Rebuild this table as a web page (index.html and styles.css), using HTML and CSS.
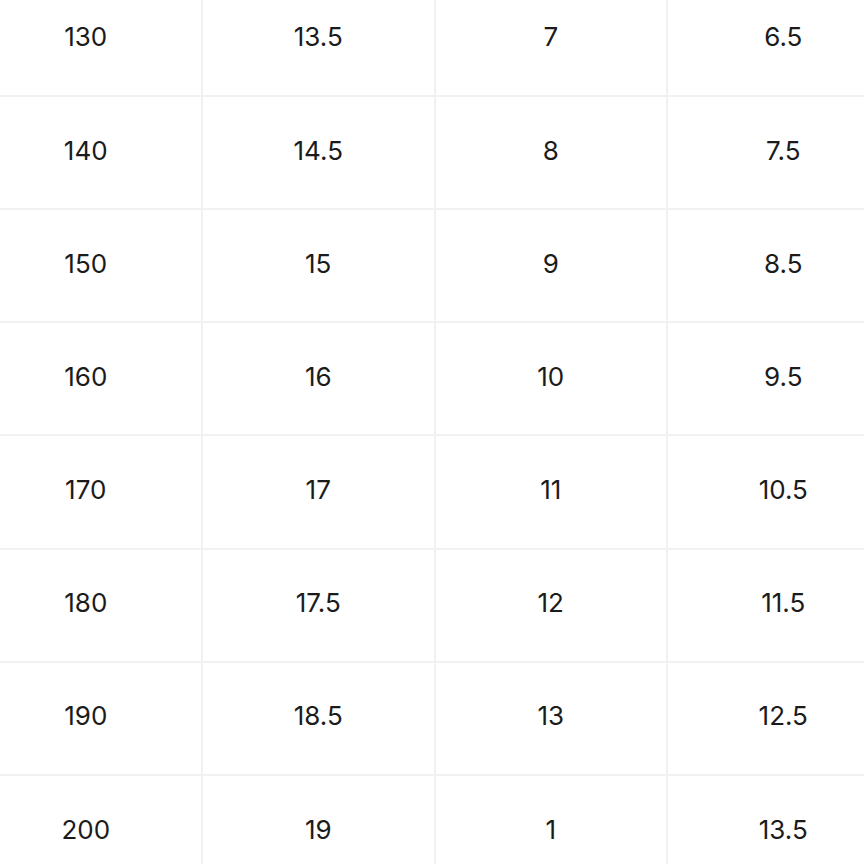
FILE: index.html
```html
<!DOCTYPE html>
<html lang="en">
<head>
<meta charset="utf-8">
<title>Size table</title>
<link rel="stylesheet" href="styles.css">
</head>
<body>
<div class="viewport">
  <div class="size-grid">
    <div class="cell">130</div><div class="cell">13.5</div><div class="cell">7</div><div class="cell">6.5</div>
    <div class="cell">140</div><div class="cell">14.5</div><div class="cell">8</div><div class="cell">7.5</div>
    <div class="cell">150</div><div class="cell">15</div><div class="cell">9</div><div class="cell">8.5</div>
    <div class="cell">160</div><div class="cell">16</div><div class="cell">10</div><div class="cell">9.5</div>
    <div class="cell">170</div><div class="cell">17</div><div class="cell">11</div><div class="cell">10.5</div>
    <div class="cell">180</div><div class="cell">17.5</div><div class="cell">12</div><div class="cell">11.5</div>
    <div class="cell">190</div><div class="cell">18.5</div><div class="cell">13</div><div class="cell">12.5</div>
    <div class="cell">200</div><div class="cell">19</div><div class="cell">1</div><div class="cell">13.5</div>
  </div>
</div>
</body>
</html>
```

FILE: styles.css
```css
html, body {
  margin: 0;
  padding: 0;
  background: #ffffff;
}
body {
  width: 864px;
  height: 864px;
  overflow: hidden;
  font-family: "Inter", "Liberation Sans", sans-serif;
}
.viewport {
  width: 864px;
  height: 864px;
  overflow: hidden;
}
.size-grid {
  display: grid;
  grid-template-columns: repeat(4, 232.5px);
  grid-auto-rows: 113.17px;
  margin: -16.17px 0 0 -29.5px;
  width: 930px;
}
.cell {
  box-sizing: border-box;
  border-right: 2px solid #f1f1f1;
  border-bottom: 2px solid #f1f1f1;
  display: flex;
  align-items: center;
  justify-content: center;
  font-size: 26px;
  font-weight: 400;
  color: #1b1b1b;
  line-height: 1;
  padding-bottom: 4px;
}
```
